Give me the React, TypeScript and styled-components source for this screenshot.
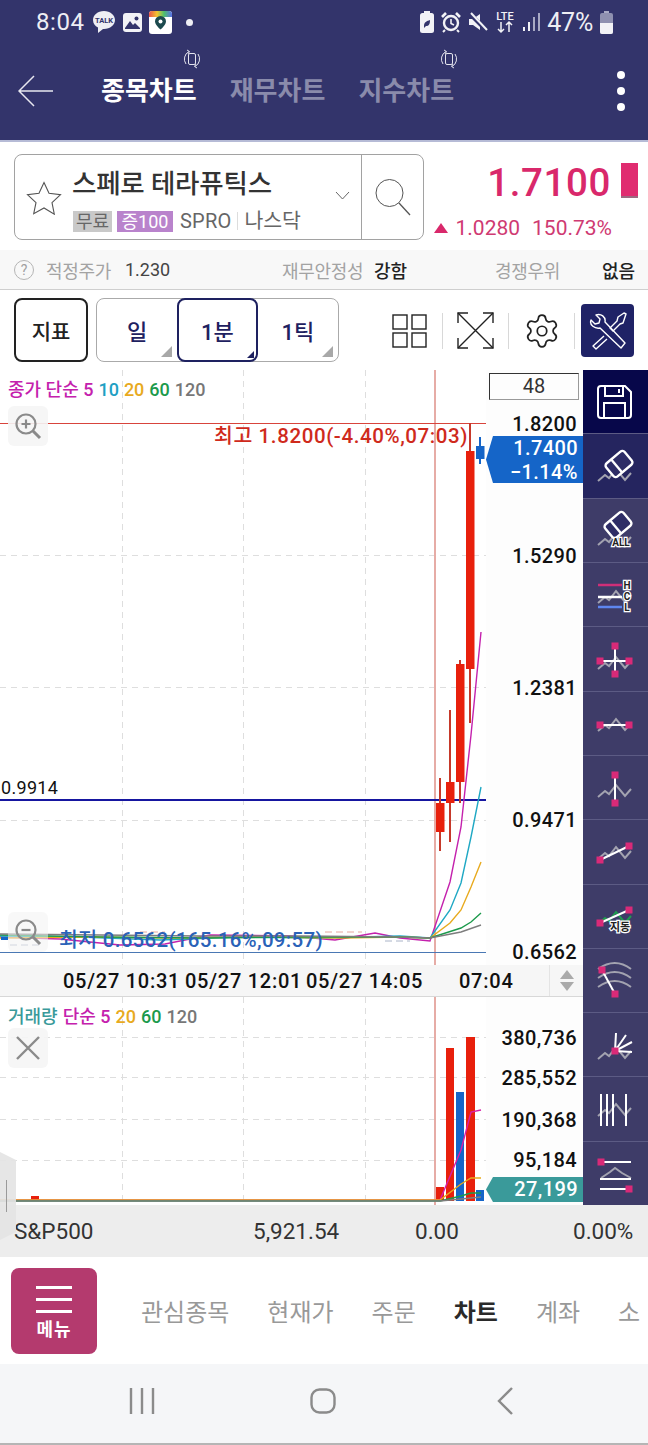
import React from "react";
import styled, { createGlobalStyle } from "styled-components";
import { Settings } from "lucide-react";

const FONT = `Roboto, "Noto Sans CJK KR", "Noto Sans", sans-serif`;
const PINK = "#d9286b";

const GlobalStyle = createGlobalStyle`
  html, body {
    margin: 0;
    padding: 0;
    background: #fff;
    overflow: hidden;
  }
  * { box-sizing: border-box; }
`;

const Page = styled.div`
  width: 648px;
  height: 1445px;
  display: flex;
  flex-direction: column;
  position: relative;
  overflow: hidden;
  font-family: ${FONT};
  color: #222;
`;

/* header */
const Header = styled.header`
  height: 140px;
  background: #33346b;
  display: flex;
  flex-direction: column;
`;

const StatusBar = styled.div`
  height: 44px;
  display: flex;
  align-items: center;
  padding: 0 35px 0 36px;
  color: #eeeef4;
`;

const Clock = styled.span`
  width: 56px;
  font-size: 24px;
  letter-spacing: 0.6px;
`;

const StatusGroup = styled.div<{ $gap: number; $right?: boolean }>`
  display: flex;
  align-items: center;
  gap: ${(p) => p.$gap}px;
  margin-left: ${(p) => (p.$right ? "auto" : "0")};
`;

const BatteryText = styled.span`
  font-size: 25px;
  letter-spacing: -0.2px;
`;

const TabRow = styled.div`
  flex: 1;
  display: flex;
  align-items: center;
  padding: 0 0 2px 18px;
`;

const TabList = styled.div`
  display: flex;
  gap: 33px;
  margin-left: 48px;
`;

const Tab = styled.div<{ $active?: boolean }>`
  position: relative;
  font-size: 26px;
  line-height: 32px;
  font-weight: 700;
  color: ${(p) => (p.$active ? "#fff" : "#8a8bab")};
`;

const RotateBadge = styled.span`
  position: absolute;
  right: -4px;
  top: -26px;
  line-height: 0;
`;

const MoreDots = styled.div`
  margin-left: auto;
  margin-right: 23px;
  display: flex;
  flex-direction: column;
  gap: 8px;
  > i {
    display: block;
    width: 8px;
    height: 8px;
    border-radius: 50%;
    background: #fff;
  }
`;

/* stock section */
const StockSection = styled.section`
  height: 110px;
  border-top: 2px solid #b6bbd6;
  display: flex;
  padding: 12px 0 0 14px;
`;

const StockBox = styled.div`
  width: 410px;
  height: 86px;
  border: 1px solid #a2a2a2;
  border-radius: 8px;
  display: flex;
`;

const StarCell = styled.div`
  width: 57px;
  display: flex;
  align-items: center;
  justify-content: center;
  padding-top: 2px;
`;

const StockMain = styled.div`
  flex: 1;
  position: relative;
  display: flex;
  flex-direction: column;
  padding-top: 12px;
`;

const StockName = styled.div`
  font-size: 26.5px;
  line-height: 34px;
  font-weight: 500;
  color: #333;
  letter-spacing: -0.2px;
`;

const TagRow = styled.div`
  display: flex;
  align-items: center;
  margin-top: 8px;
  font-size: 19px;
  color: #666;
`;

const Tag = styled.span<{ $bg: string; $fg: string; $w: number }>`
  width: ${(p) => p.$w}px;
  height: 21px;
  line-height: 21px;
  text-align: center;
  font-size: 18px;
  background: ${(p) => p.$bg};
  color: ${(p) => p.$fg};
  margin: 0 4px 0 1px;
`;

const TagCode = styled.span`
  margin-left: 3px;
  font-size: 20px;
  letter-spacing: 0.2px;
`;

const TagMarket = styled.span`
  margin-left: 6px;
  padding-left: 6px;
  font-size: 20.5px;
  border-left: 1px solid #ddd;
  line-height: 18px;
`;

const Chevron = styled.span`
  position: absolute;
  right: 11px;
  top: 36px;
  line-height: 0;
`;

const SearchCell = styled.div`
  width: 62px;
  border-left: 1px solid #a2a2a2;
  display: flex;
  align-items: center;
  justify-content: center;
`;

const PriceCol = styled.div`
  flex: 1;
  display: flex;
  flex-direction: column;
  align-items: flex-end;
  padding-right: 10px;
`;

const PriceRow = styled.div`
  display: flex;
  align-items: center;
  gap: 10px;
  height: 44px;
  margin-top: 6px;
`;

const Price = styled.span`
  font-size: 38.5px;
  font-weight: 500;
  color: ${PINK};
  letter-spacing: 0.6px;
`;

const PriceBar = styled.i`
  display: block;
  width: 17px;
  height: 35px;
  margin-top: -3px;
  background: #e02c70;
  border-bottom: 2px solid #9b6a80;
`;

const ChangeRow = styled.div`
  display: flex;
  align-items: center;
  margin: 12px 26px 0 0;
  font-size: 21px;
  color: #cf3a72;
`;

const UpMark = styled.i`
  width: 0;
  height: 0;
  border-left: 7px solid transparent;
  border-right: 7px solid transparent;
  border-bottom: 10px solid ${PINK};
  margin-right: 8px;
`;

const ChangePct = styled.span`
  margin-left: 12px;
`;

/* info strip */
const InfoRow = styled.div`
  height: 40px;
  background: #f8f8f8;
  border-bottom: 1px solid #cfcfcf;
  display: flex;
  align-items: center;
  padding-left: 14px;
  font-size: 18px;
`;

const Help = styled.span`
  width: 20px;
  height: 20px;
  border-radius: 50%;
  border: 1px solid #b5b5b5;
  color: #a0a0a0;
  font-size: 14px;
  line-height: 18px;
  text-align: center;
`;

const InfoLabel = styled.span<{ $w: number; $ml: number }>`
  width: ${(p) => p.$w}px;
  margin-left: ${(p) => p.$ml}px;
  color: #a3a3a3;
  white-space: nowrap;
  letter-spacing: -0.3px;
`;

const InfoValue = styled.span<{ $ml: number; $w: number; $strong?: boolean }>`
  width: ${(p) => p.$w}px;
  margin-left: ${(p) => p.$ml}px;
  color: ${(p) => (p.$strong ? "#222" : "#444")};
  font-weight: ${(p) => (p.$strong ? 500 : 400)};
  white-space: nowrap;
`;

/* toolbar */
const Toolbar = styled.div`
  height: 80px;
  display: flex;
  align-items: flex-start;
  padding: 8px 14px 0;
`;

const IndicatorBtn = styled.div`
  width: 74px;
  height: 64px;
  border: 2px solid #222;
  border-radius: 8px;
  display: flex;
  align-items: center;
  justify-content: center;
  font-size: 21px;
  font-weight: 500;
  color: #222;
`;

const PeriodGroup = styled.div`
  margin-left: 8px;
  width: 243px;
  height: 64px;
  border: 1px solid #aaa;
  border-radius: 8px;
  display: flex;
`;

const PeriodBtn = styled.div<{ $active?: boolean }>`
  position: relative;
  flex: 1;
  margin: -1px 0;
  border: ${(p) => (p.$active ? "2px solid #1e2160" : "2px solid transparent")};
  border-radius: 8px;
  display: flex;
  align-items: center;
  justify-content: center;
  font-size: 22px;
  font-weight: 500;
  color: #1e2160;
  &::after {
    content: "";
    position: absolute;
    right: ${(p) => (p.$active ? 2 : 3)}px;
    bottom: ${(p) => (p.$active ? 2 : 3)}px;
    border-style: solid;
    border-width: 0 0 ${(p) => (p.$active ? 7 : 11)}px ${(p) => (p.$active ? 7 : 11)}px;
    border-color: transparent transparent ${(p) => (p.$active ? "#1e2160" : "#a8a8a8")} transparent;
  }
`;

const ToolIcons = styled.div`
  margin-left: auto;
  display: flex;
  align-items: center;
  height: 53px;
  margin-top: 6px;
`;

const ToolSlot = styled.div<{ $w: number }>`
  width: ${(p) => p.$w}px;
  height: 100%;
  display: flex;
  align-items: center;
  justify-content: center;
`;

const ToolSep = styled.i`
  width: 1px;
  height: 36px;
  background: #d8d8d8;
`;

const ToolsBtn = styled.div`
  margin-left: 6px;
  width: 53px;
  height: 53px;
  background: #1f2266;
  border-radius: 4px;
  display: flex;
  align-items: center;
  justify-content: center;
`;

/* chart area */
const ChartArea = styled.div`
  height: 835px;
  display: grid;
  grid-template-columns: 583px 65px;
  grid-template-rows: 835px;
`;

const ChartCol = styled.div`
  display: flex;
  flex-direction: column;
`;

const Pane = styled.div<{ $h: number }>`
  position: relative;
  height: ${(p) => p.$h}px;
  background: linear-gradient(to right, #fff 486px, #fdfdfd 486px);
  > svg {
    display: block;
  }
`;

const Legend = styled.div`
  position: absolute;
  left: 8px;
  top: 9px;
  font-size: 18px;
  line-height: 22px;
  font-weight: 500;
  white-space: nowrap;
`;

const LegendPart = styled.span<{ $color: string }>`
  color: ${(p) => p.$color};
  margin-right: 5px;
`;

const PaneBtn = styled.div<{ $top: number; $faded?: boolean }>`
  position: absolute;
  left: 8px;
  top: ${(p) => p.$top}px;
  width: 40px;
  height: 40px;
  border-radius: 6px;
  background: ${(p) => (p.$faded ? "rgba(243,243,243,0.55)" : "rgba(245,245,245,0.9)")};
  display: flex;
  align-items: center;
  justify-content: center;
`;

const AxisLabel = styled.span<{ $top: number }>`
  position: absolute;
  right: 6px;
  top: ${(p) => p.$top}px;
  transform: translateY(-50%);
  font-size: 20px;
  font-weight: 500;
  line-height: 24px;
  letter-spacing: 0.4px;
  color: #111;
`;

const RefLabel = styled.span`
  position: absolute;
  left: 1px;
  top: 407px;
  font-size: 18px;
  line-height: 22px;
  color: #111;
  letter-spacing: 0.3px;
`;

const NoteLabel = styled.span<{ $top: number; $left: number; $color: string; $ls: number }>`
  position: absolute;
  left: ${(p) => p.$left}px;
  top: ${(p) => p.$top}px;
  font-size: 20.5px;
  line-height: 24px;
  font-weight: 500;
  color: ${(p) => p.$color};
  white-space: nowrap;
  letter-spacing: ${(p) => p.$ls}px;
`;

const CountBox = styled.div`
  position: absolute;
  left: 489px;
  top: 3px;
  width: 90px;
  height: 27px;
  border: 1px solid #333;
  border-right: 1px solid #999;
  border-bottom: 1px solid #999;
  text-align: center;
  font-size: 20px;
  line-height: 25px;
  color: #333;
`;

const PriceTag = styled.div<{ $bg: string; $top: number; $h: number }>`
  position: absolute;
  left: 486px;
  top: ${(p) => p.$top}px;
  width: 97px;
  height: ${(p) => p.$h}px;
  background: ${(p) => p.$bg};
  clip-path: polygon(0 50%, 7px 0, 100% 0, 100% 100%, 7px 100%);
  color: #fff;
  font-size: 20px;
  font-weight: 500;
  line-height: 24px;
  letter-spacing: 0.4px;
  text-align: right;
  padding-right: 5px;
`;

const TimeAxis = styled.div`
  height: 32px;
  background: #f6f6f6;
  border-bottom: 1px solid #d8d8d8;
  display: flex;
  align-items: center;
  padding-left: 63px;
  font-size: 20px;
  font-weight: 500;
  color: #111;
  letter-spacing: 0.75px;
`;

const TimeTick = styled.span<{ $w: number }>`
  width: ${(p) => p.$w}px;
  white-space: nowrap;
`;

const ScrollArrows = styled.div`
  margin-left: auto;
  width: 34px;
  height: 100%;
  border-left: 1px solid #e4e4e4;
  display: flex;
  flex-direction: column;
  align-items: center;
  justify-content: center;
  gap: 3px;
  &::before,
  &::after {
    content: "";
    border-left: 7px solid transparent;
    border-right: 7px solid transparent;
  }
  &::before {
    border-bottom: 9px solid #aaa;
  }
  &::after {
    border-top: 9px solid #aaa;
  }
`;

const Rail = styled.nav`
  display: flex;
  flex-direction: column;
  background: #3e3c68;
`;

const RailCell = styled.div<{ $bg?: string }>`
  flex: 1;
  min-height: 0;
  background: ${(p) => p.$bg || "transparent"};
  border-bottom: 1px solid #5c5b84;
  line-height: 0;
  &:last-child {
    border-bottom: 0;
  }
`;

const SideHandle = styled.div`
  position: absolute;
  left: 0;
  top: 1152px;
  width: 16px;
  height: 88px;
  background: rgba(228, 228, 228, 0.92);
  clip-path: polygon(0 0, 100% 8px, 100% 80px, 0 100%);
  &::after {
    content: "";
    position: absolute;
    left: 6px;
    top: 28px;
    width: 1px;
    height: 32px;
    background: #9a9a9a;
  }
`;

/* bottom */
const IndexRow = styled.div`
  height: 52px;
  background: #ededed;
  display: flex;
  align-items: center;
  padding-left: 14px;
  font-size: 22.5px;
  color: #333;
`;

const IndexCell = styled.span<{ $w: number }>`
  width: ${(p) => p.$w}px;
  white-space: nowrap;
`;

const BottomNav = styled.div`
  height: 107px;
  background: #fff;
  display: flex;
  align-items: center;
  padding-left: 11px;
`;

const MenuBtn = styled.div`
  width: 86px;
  height: 86px;
  background: #b43a6e;
  border-radius: 8px;
  display: flex;
  flex-direction: column;
  align-items: center;
  padding-top: 18px;
  color: #fff;
  > i {
    display: block;
    width: 36px;
    height: 3px;
    background: #fff;
    margin-bottom: 9px;
  }
`;

const MenuText = styled.span`
  font-size: 18px;
  font-weight: 700;
  line-height: 18px;
  margin-top: -1px;
  letter-spacing: 1px;
`;

const NavItems = styled.div`
  display: flex;
  margin-left: 44px;
  gap: 38px;
  white-space: nowrap;
`;

const NavItem = styled.span<{ $active?: boolean }>`
  font-size: 24px;
  color: ${(p) => (p.$active ? "#2a2a2a" : "#999")};
  font-weight: ${(p) => (p.$active ? 700 : 400)};
`;

const SystemNav = styled.div`
  height: 81px;
  background: #f5f6f8;
  border-bottom: 2px solid #b5b5b5;
  display: flex;
  align-items: center;
  padding: 0 0 5px 129px;
`;

const SysIcon = styled.svg<{ $ml: number }>`
  margin-left: ${(p) => p.$ml}px;
`;

/* chart drawings */
const GRID_X = [122.5, 243.5, 365.5];

const candles = [
  { x: 436, top: 803, bottom: 832, hi: 778, lo: 851, up: true },
  { x: 446, top: 782, bottom: 803, hi: 710, lo: 842, up: true },
  { x: 456, top: 664, bottom: 782, hi: 660, lo: 803, up: true },
  { x: 466, top: 451, bottom: 669, hi: 423, lo: 723, up: true },
  { x: 476, top: 446, bottom: 459, hi: 437, lo: 464, up: false },
];

const maLines = [
  { color: "#c421ad", pts: "0,937 60,939 120,945 165,944 210,935 290,936 335,940 375,933 400,938 430,941 450,882 461,827 471,735 481,632" },
  { color: "#1fa8c4", pts: "0,936 80,937 160,940 240,937 320,938 400,936 430,938 450,910 461,883 471,837 481,787" },
  { color: "#e8aa1e", pts: "0,938 90,937 170,938 250,937 340,938 400,937 430,938 450,923 461,910 471,887 481,862" },
  { color: "#1c9a4c", pts: "0,935 100,937 200,938 300,937 400,937 430,938 461,928 471,922 481,913" },
  { color: "#7d7d7d", pts: "0,934 100,935 200,936 300,936 400,937 430,938 461,932 481,925" },
];

const volBars = [
  { x: 31, top: 1196, w: 8, color: "#e8200c" },
  { x: 436, top: 1187, w: 8, color: "#e8200c" },
  { x: 446, top: 1048, w: 8, color: "#e8200c" },
  { x: 456, top: 1092, w: 8, color: "#1565c8" },
  { x: 466, top: 1037, w: 9, color: "#e8200c" },
  { x: 476, top: 1190, w: 8, color: "#1565c8" },
];

const volLines = [
  { color: "#d81fa8", pts: "0,1200 432,1200 440,1200 461,1150 471,1112 481,1110" },
  { color: "#e8aa1e", pts: "0,1200 440,1200 461,1184 471,1178 481,1178" },
  { color: "#1c9a4c", pts: "0,1201 440,1201 461,1196 471,1193 481,1193" },
  { color: "#7d7d7d", pts: "0,1201 440,1201 461,1199 481,1197" },
];

const Gridlines = ({ y0, y1, rows }: { y0: number; y1: number; rows: number[] }) => (
  <g stroke="#dedede" strokeDasharray="6 5" strokeWidth="1">
    {GRID_X.map((x) => (
      <line key={x} x1={x} x2={x} y1={y0} y2={y1} />
    ))}
    {rows.map((y) => (
      <line key={y} x1={0} x2={486} y1={y + 0.5} y2={y + 0.5} />
    ))}
  </g>
);

const PriceChart = () => (
  <svg width="583" height="595" viewBox="0 370 583 595">
    <Gridlines y0={370} y1={965} rows={[555, 687, 820]} />
    <line x1="435" x2="435" y1="370" y2="965" stroke="#e6aca6" strokeWidth="2" />
    <line x1="0" x2="486" y1="423.5" y2="423.5" stroke="#d8443c" />
    <line x1="0" x2="486" y1="800" y2="800" stroke="#1616a0" strokeWidth="2" />
    <line x1="0" x2="486" y1="952.5" y2="952.5" stroke="#4a78b4" />
    {candles.map((c) => (
      <g key={c.x}>
        <line x1={c.x + 4} x2={c.x + 4} y1={c.hi} y2={c.lo} stroke={c.up ? "#c6392a" : "#1565c8"} strokeWidth="2" />
        <rect x={c.x} y={c.top} width="8.5" height={c.bottom - c.top} fill={c.up ? "#e8200c" : "#1565c8"} />
      </g>
    ))}
    <g stroke="#aab4c8" strokeDasharray="7 4" fill="none">
      <line x1="10" x2="40" y1="945" y2="945" />
      <line x1="325" x2="362" y1="932" y2="932" stroke="#e8a8a0" />
      <line x1="385" x2="410" y1="941" y2="941" />
      <line x1="140" x2="165" y1="932" y2="932" stroke="#e8a8a0" />
    </g>
    {maLines.map((l) => (
      <polyline key={l.color} points={l.pts} fill="none" stroke={l.color} strokeWidth="1.4" />
    ))}
    <rect x="1" y="937" width="7" height="3" fill="#1565c8" />
  </svg>
);

const VolumeChart = () => (
  <svg width="583" height="208" viewBox="0 997 583 208">
    <Gridlines y0={997} y1={1205} rows={[1037, 1077, 1119, 1160]} />
    <line x1="435" x2="435" y1="997" y2="1205" stroke="#e6aca6" strokeWidth="2" />
    {volBars.map((b) => (
      <rect key={b.x} x={b.x} y={b.top} width={b.w} height={1201 - b.top} fill={b.color} />
    ))}
    {volLines.map((l) => (
      <polyline key={l.color} points={l.pts} fill="none" stroke={l.color} strokeWidth="1.4" />
    ))}
  </svg>
);

/* rail icons, all drawn on the 65x64 cell */
const Zig = ({ y, color = "#a3a3b0" }: { y: number; color?: string }) => (
  <polyline
    points={`15,${y + 6} 22,${y} 26,${y + 3} 33,${y - 6} 42,${y + 5} 48,${y - 2}`}
    fill="none"
    stroke={color}
    strokeWidth="2"
  />
);

const Sq = ({ x, y }: { x: number; y: number }) => (
  <rect x={x - 3.5} y={y - 3.5} width="7" height="7" fill="#d92a78" />
);

const Eraser = ({ x, y }: { x: number; y: number }) => (
  <g transform={`translate(${x} ${y}) rotate(-40)`} stroke="#fff" strokeWidth="2.4" fill="#2e2d66">
    <rect x="-12" y="-8.5" width="24" height="17" rx="3" />
    <line x1="-3" x2="-3" y1="-8.5" y2="8.5" />
  </g>
);

const Badge = ({ x, y, children, size = 10 }: { x: number; y: number; children: React.ReactNode; size?: number }) => (
  <text
    x={x}
    y={y}
    textAnchor="middle"
    fontSize={size}
    fontWeight="700"
    fill="#222"
    stroke="#fff"
    strokeWidth="2.5"
    paintOrder="stroke"
    fontFamily={FONT}
  >
    {children}
  </text>
);

const W = { stroke: "#fff", strokeWidth: 2, fill: "none" };

const railIcons: React.ReactNode[] = [
  <>
    <path d="M18 16h24l6 6v23a3 3 0 0 1-3 3H18a3 3 0 0 1-3-3V19a3 3 0 0 1 3-3z" {...W} />
    <path d="M22 16v10h18V16" {...W} />
    <path d="M21 48V33h21v15" {...W} />
    <line x1="36" x2="36" y1="19" y2="23" {...W} />
  </>,
  <>
    <Zig y={41} />
    <Eraser x={36} y={30} />
  </>,
  <>
    <Zig y={40} />
    <Eraser x={35} y={26} />
    <Badge x={38} y={47}>ALL</Badge>
  </>,
  <>
    <Zig y={34} />
    <line x1="15" x2="39" y1="22" y2="22" stroke="#cf2f78" strokeWidth="2.5" />
    <line x1="15" x2="39" y1="34" y2="34" stroke="#fff" strokeWidth="2.5" />
    <line x1="15" x2="39" y1="44" y2="44" stroke="#5e86f0" strokeWidth="2.5" />
    <Badge x={44} y={26}>H</Badge>
    <Badge x={44} y={37}>C</Badge>
    <Badge x={44} y={48}>L</Badge>
  </>,
  <>
    <Zig y={36} />
    <line x1="32" x2="32" y1="19" y2="47" {...W} />
    <line x1="17" x2="46" y1="34" y2="34" {...W} />
    <Sq x={32} y={19} />
    <Sq x={32} y={47} />
    <Sq x={17} y={34} />
    <Sq x={46} y={34} />
  </>,
  <>
    <Zig y={33} />
    <line x1="17" x2="46" y1="33" y2="33" {...W} />
    <Sq x={17} y={33} />
    <Sq x={46} y={33} />
  </>,
  <>
    <Zig y={35} />
    <line x1="32" x2="32" y1="19" y2="47" {...W} />
    <Sq x={32} y={19} />
    <Sq x={32} y={47} />
  </>,
  <>
    <Zig y={33} />
    <line x1="17" x2="46" y1="40" y2="26" {...W} />
    <Sq x={17} y={40} />
    <Sq x={46} y={26} />
  </>,
  <>
    <Zig y={33} color="#1f9c4e" />
    <line x1="17" x2="46" y1="38" y2="25" {...W} />
    <Sq x={17} y={38} />
    <Sq x={46} y={25} />
    <Badge x={37} y={46} size={11}>지동</Badge>
  </>,
  <>
    <path d="M15 20q17-12 33 0M15 29q17-12 33 0M15 38q17-12 33 0" fill="none" stroke="#a3a3b0" strokeWidth="2" />
    <line x1="19" x2="32" y1="21" y2="45" {...W} />
    <Sq x={19} y={21} />
    <Sq x={32} y={45} />
  </>,
  <>
    <Zig y={40} />
    <path d="M32 38L33 20M32 38L43 22M32 38L49 29M32 38L49 39" {...W} />
    <Sq x={32} y={38} />
  </>,
  <>
    <Zig y={33} />
    <path d="M18 17v32M24 17v32M30 17v32M43 17v32" {...W} />
  </>,
  <>
    <polyline points="18,36 27,30 32,26 39,31 48,36" fill="none" stroke="#a3a3b0" strokeWidth="2" />
    <line x1="17" x2="48" y1="20" y2="20" {...W} />
    <line x1="17" x2="48" y1="37" y2="37" {...W} />
    <line x1="17" x2="48" y1="47" y2="47" {...W} />
    <Sq x={18} y={20} />
    <Sq x={46} y={47} />
  </>,
];

/* status bar icons */
const KakaoIcon = () => (
  <svg width="24" height="24" viewBox="0 0 24 24">
    <path d="M12 1C5.6 1 1 5 1 10c0 3.400 2.100 6 5 7.500L6 23l5-4.100h1c6.100 0 11-3.900 11-8.900S18.100 1 12 1z" fill="#eeeef4" />
    <text x="12" y="13" textAnchor="middle" fontSize="7.500" fontWeight="700" fill="#33346b" fontFamily={FONT}>TALK</text>
  </svg>
);

const GalleryIcon = () => (
  <svg width="19" height="19" viewBox="0 0 19 19">
    <rect width="19" height="19" rx="3" fill="#f2f2f6" />
    <circle cx="13.500" cy="5.500" r="2" fill="#33346b" />
    <path d="M2 15l5-7 3 4 2-2 5 5v1H2z" fill="#33346b" />
  </svg>
);

const MapIcon = () => (
  <svg width="23" height="23" viewBox="0 0 23 23">
    <defs>
      <linearGradient id="mapBow" x1="0" x2="1" y1="0" y2="0">
        <stop offset="0" stopColor="#e8524a" />
        <stop offset="0.35" stopColor="#f4c430" />
        <stop offset="0.65" stopColor="#4cc06a" />
        <stop offset="1" stopColor="#5a6ee8" />
      </linearGradient>
    </defs>
    <rect width="23" height="23" rx="3" fill="#fff" />
    <path d="M0 6V3a3 3 0 0 1 3-3h17a3 3 0 0 1 3 3v3z" fill="url(#mapBow)" />
    <path d="M11.500 5a5.500 5.500 0 0 0-5.500 5.500c0 3.500 5.500 8 5.500 8s5.500-4.500 5.500-8A5.500 5.500 0 0 0 11.500 5z" fill="#1c4a4e" />
    <circle cx="11.500" cy="10.500" r="2" fill="#fff" />
  </svg>
);

const Dot = styled.i`
  width: 7px;
  height: 7px;
  border-radius: 50%;
  background: #eeeef4;
  margin-left: 14px;
`;

const BatteryLeaf = () => (
  <svg width="14" height="22" viewBox="0 0 14 22">
    <rect x="4" y="0" width="6" height="3" fill="#f2f2f6" />
    <rect x="0" y="2" width="14" height="20" rx="2.500" fill="#f2f2f6" />
    <path d="M4 15c0-4 3-5 6-6 0 4-1 6-4 6l-2 2z" fill="#33346b" />
  </svg>
);

const AlarmIcon = () => (
  <svg width="20" height="22" viewBox="0 0 20 22" fill="none" stroke="#f2f2f6">
    <circle cx="10" cy="12" r="7" strokeWidth="2.400" />
    <path d="M10 8v4.500l3 1.500" strokeWidth="1.600" />
    <path d="M1 6l4-4M19 6l-4-4" strokeWidth="2.600" />
    <path d="M4 19l-2 2M16 19l2 2" strokeWidth="2" />
  </svg>
);

const MuteIcon = () => (
  <svg width="20" height="20" viewBox="0 0 20 20">
    <path d="M1 7h4l7-5v16l-7-5H1z" fill="#f2f2f6" />
    <path d="M2 2l16 16" stroke="#33346b" strokeWidth="4" />
    <path d="M3 1l16 17" stroke="#f2f2f6" strokeWidth="2" />
  </svg>
);

const LteIcon = () => (
  <svg width="20" height="24" viewBox="0 0 20 24" fill="none" stroke="#f2f2f6" strokeWidth="1.500">
    <text x="10" y="10" textAnchor="middle" fontSize="11" fontWeight="500" fill="#f2f2f6" stroke="none" fontFamily={FONT}>LTE</text>
    <path d="M6 12v10M3 19l3 3 3-3M14 22V12M11 15l3-3 3 3" />
  </svg>
);

const SignalIcon = () => (
  <svg width="18" height="20" viewBox="0 0 18 20" stroke="#f2f2f6" strokeWidth="2">
    <line x1="2" x2="2" y1="15" y2="19" />
    <line x1="7" x2="7" y1="10" y2="19" />
    <line x1="12" x2="12" y1="5" y2="19" stroke="#a8a9c4" />
    <line x1="17" x2="17" y1="1" y2="19" stroke="#a8a9c4" />
  </svg>
);

const BatteryIcon = () => (
  <svg width="13" height="23" viewBox="0 0 13 23">
    <rect x="4" y="0" width="5" height="2" fill="#a8a9c4" />
    <rect x="0" y="2" width="13" height="21" rx="2" fill="#8f90b0" />
    <path d="M0 12h13v9a2 2 0 0 1-2 2H2a2 2 0 0 1-2-2z" fill="#f2f2f6" />
  </svg>
);

const RotateIcon = () => (
  <svg width="18" height="20" viewBox="0 0 18 20" fill="none" stroke="#e4e4ee" strokeWidth="1">
    <rect x="5.500" y="4.500" width="7" height="11" rx="1.500" />
    <path d="M3 15A8.500 8.500 0 0 1 6 2.500M15 5a8.500 8.500 0 0 1-3 12.500" />
    <path d="M4 1l2.500 1.500L5 5M14 19l-2.500-1.500L13 15" />
  </svg>
);

export default function App() {
  return (
    <Page>
      <GlobalStyle />
      <Header>
        <StatusBar>
          <Clock>8:04</Clock>
          <StatusGroup $gap={7}>
            <KakaoIcon />
            <GalleryIcon />
            <MapIcon />
          </StatusGroup>
          <Dot />
          <StatusGroup $gap={7} $right>
            <BatteryLeaf />
            <AlarmIcon />
            <MuteIcon />
            <LteIcon />
            <SignalIcon />
            <BatteryText>47%</BatteryText>
            <BatteryIcon />
          </StatusGroup>
        </StatusBar>
        <TabRow>
          <svg width="35" height="32" viewBox="0 0 35 32" fill="none" stroke="#e8e8f0" strokeWidth="1.500">
            <path d="M16 1L1 16l15 15M1 16h34" />
          </svg>
          <TabList>
            <Tab $active>
              종목차트
              <RotateBadge><RotateIcon /></RotateBadge>
            </Tab>
            <Tab>재무차트</Tab>
            <Tab>
              지수차트
              <RotateBadge><RotateIcon /></RotateBadge>
            </Tab>
          </TabList>
          <MoreDots>
            <i />
            <i />
            <i />
          </MoreDots>
        </TabRow>
      </Header>

      <StockSection>
        <StockBox>
          <StarCell>
            <svg width="36" height="34" viewBox="0 0 36 34" fill="none" stroke="#555" strokeWidth="1.100">
              <path d="M18 1.500l5 10.800 11.500 1.400-8.500 8 2.300 11.500L18 27l-10.300 5.700L10 21.700l-8.500-8L13 12.300z" />
            </svg>
          </StarCell>
          <StockMain>
            <StockName>스페로 테라퓨틱스</StockName>
            <TagRow>
              <Tag $bg="#c9c9c9" $fg="#666" $w={39}>무료</Tag>
              <Tag $bg="#b983cc" $fg="#fff" $w={56}>증100</Tag>
              <TagCode>SPRO</TagCode>
              <TagMarket>나스닥</TagMarket>
            </TagRow>
            <Chevron>
              <svg width="15" height="9" viewBox="0 0 15 9" fill="none" stroke="#666" strokeWidth="1">
                <path d="M1 1l6.500 7L14 1" />
              </svg>
            </Chevron>
          </StockMain>
          <SearchCell>
            <svg width="36" height="38" viewBox="0 0 36 38" fill="none" stroke="#555" strokeWidth="1">
              <circle cx="14.500" cy="15" r="13.500" />
              <path d="M24 25l11 12" strokeWidth="1.300" />
            </svg>
          </SearchCell>
        </StockBox>
        <PriceCol>
          <PriceRow>
            <Price>1.7100</Price>
            <PriceBar />
          </PriceRow>
          <ChangeRow>
            <UpMark />
            1.0280
            <ChangePct>150.73%</ChangePct>
          </ChangeRow>
        </PriceCol>
      </StockSection>

      <InfoRow>
        <Help>?</Help>
        <InfoLabel $ml={12} $w={65}>적정주가</InfoLabel>
        <InfoValue $ml={14} $w={157}>1.230</InfoValue>
        <InfoLabel $ml={0} $w={81}>재무안정성</InfoLabel>
        <InfoValue $ml={11} $w={89} $strong>강함</InfoValue>
        <InfoLabel $ml={32} $w={65}>경쟁우위</InfoLabel>
        <InfoValue $ml={42} $w={34} $strong>없음</InfoValue>
      </InfoRow>

      <Toolbar>
        <IndicatorBtn>지표</IndicatorBtn>
        <PeriodGroup>
          <PeriodBtn>일</PeriodBtn>
          <PeriodBtn $active>1분</PeriodBtn>
          <PeriodBtn>1틱</PeriodBtn>
        </PeriodGroup>
        <ToolIcons>
          <ToolSlot $w={66}>
            <svg width="35" height="34" viewBox="0 0 35 34" fill="none" stroke="#222" strokeWidth="1.400">
              <rect x="1" y="1" width="14" height="14" />
              <rect x="20" y="1" width="14" height="14" />
              <rect x="1" y="19" width="14" height="14" />
              <rect x="20" y="19" width="14" height="14" />
            </svg>
          </ToolSlot>
          <ToolSep />
          <ToolSlot $w={65}>
            <svg width="37" height="37" viewBox="0 0 37 37" fill="none" stroke="#222" strokeWidth="1.400">
              <path d="M1 1l35 35M36 1L1 36" />
              <path d="M1 11V1h10M26 1h10v10M36 26v10H26M11 36H1V26" />
            </svg>
          </ToolSlot>
          <ToolSep />
          <ToolSlot $w={65}>
            <Settings size={38} strokeWidth={1.100} color="#222" />
          </ToolSlot>
          <ToolSep />
          <ToolsBtn>
            <svg width="38" height="38" viewBox="0 0 38 38" fill="none" stroke="#fff" strokeWidth="1.400" strokeLinejoin="round">
              <path d="M2 8l4 4 4-1 1-4-4-4c5-2 10 2 9 7l20 21-4 5L11 16C6 17 0 13 2 8z" />
              <path d="M37 2l-2-1-6 4-1 4-7 7 3 3 7-7 3-1z" />
              <path d="M15 24L4 34l3 3 11-10" />
            </svg>
          </ToolsBtn>
        </ToolIcons>
      </Toolbar>

      <ChartArea>
        <ChartCol>
          <Pane $h={595}>
            <PriceChart />
            <Legend>
              <LegendPart $color="#c421ad">종가 단순 5</LegendPart>
              <LegendPart $color="#1fa0c4">10</LegendPart>
              <LegendPart $color="#e8aa1e">20</LegendPart>
              <LegendPart $color="#1c9a4c">60</LegendPart>
              <LegendPart $color="#777">120</LegendPart>
            </Legend>
            <PaneBtn $top={36}>
              <svg width="28" height="28" viewBox="0 0 28 28" fill="none" stroke="#8a8a8a" strokeWidth="2.200">
                <circle cx="12" cy="12" r="9.500" />
                <path d="M7.500 12h9M12 7.500v9" />
                <path d="M19 19l7 7" strokeWidth="3" />
              </svg>
            </PaneBtn>
            <PaneBtn $top={542} $faded>
              <svg width="28" height="28" viewBox="0 0 28 28" fill="none" stroke="#8a8a8a" strokeWidth="2.200">
                <circle cx="12" cy="12" r="9.500" />
                <path d="M7.500 12h9" />
                <path d="M19 19l7 7" strokeWidth="3" />
              </svg>
            </PaneBtn>
            <CountBox>48</CountBox>
            <NoteLabel $left={214} $top={54} $color="#cf2a1c" $ls={0.6}>최고 1.8200(-4.40%,07:03)</NoteLabel>
            <NoteLabel $left={59} $top={558} $color="#2a62b8" $ls={0.3}>최저 0.6562(165.16%,09:57)</NoteLabel>
            <RefLabel>0.9914</RefLabel>
            <AxisLabel $top={54}>1.8200</AxisLabel>
            <AxisLabel $top={186}>1.5290</AxisLabel>
            <AxisLabel $top={318}>1.2381</AxisLabel>
            <AxisLabel $top={450}>0.9471</AxisLabel>
            <AxisLabel $top={582}>0.6562</AxisLabel>
            <PriceTag $bg="#1565c8" $top={66} $h={47}>
              1.7400
              <br />
              −1.14%
            </PriceTag>
          </Pane>
          <TimeAxis>
            <TimeTick $w={122}>05/27 10:31</TimeTick>
            <TimeTick $w={121}>05/27 12:01</TimeTick>
            <TimeTick $w={153}>05/27 14:05</TimeTick>
            <TimeTick $w={55}>07:04</TimeTick>
            <ScrollArrows />
          </TimeAxis>
          <Pane $h={208}>
            <VolumeChart />
            <Legend>
              <LegendPart $color="#3a9a9a">거래량</LegendPart>
              <LegendPart $color="#c421ad">단순 5</LegendPart>
              <LegendPart $color="#e8aa1e">20</LegendPart>
              <LegendPart $color="#1c9a4c">60</LegendPart>
              <LegendPart $color="#777">120</LegendPart>
            </Legend>
            <PaneBtn $top={31}>
              <svg width="24" height="24" viewBox="0 0 24 24" stroke="#8a8a8a" strokeWidth="2.400">
                <path d="M1 1l22 22M23 1L1 23" />
              </svg>
            </PaneBtn>
            <AxisLabel $top={41}>380,736</AxisLabel>
            <AxisLabel $top={81}>285,552</AxisLabel>
            <AxisLabel $top={123}>190,368</AxisLabel>
            <AxisLabel $top={163}>95,184</AxisLabel>
            <PriceTag $bg="#3a9a9a" $top={180} $h={25}>27,199</PriceTag>
          </Pane>
        </ChartCol>
        <Rail>
          {railIcons.map((icon, i) => (
            <RailCell key={i} $bg={i === 0 ? "#07074a" : i === 1 ? "#25255f" : undefined}>
              <svg width="65" height="64" viewBox="0 0 65 64">{icon}</svg>
            </RailCell>
          ))}
        </Rail>
      </ChartArea>

      <IndexRow>
        <IndexCell $w={239}>S&amp;P500</IndexCell>
        <IndexCell $w={162}>5,921.54</IndexCell>
        <IndexCell $w={158}>0.00</IndexCell>
        <IndexCell $w={60}>0.00%</IndexCell>
      </IndexRow>

      <BottomNav>
        <MenuBtn>
          <i />
          <i />
          <i />
          <MenuText>메뉴</MenuText>
        </MenuBtn>
        <NavItems>
          <NavItem>관심종목</NavItem>
          <NavItem>현재가</NavItem>
          <NavItem>주문</NavItem>
          <NavItem $active>차트</NavItem>
          <NavItem>계좌</NavItem>
          <NavItem>소</NavItem>
        </NavItems>
      </BottomNav>

      <SystemNav>
        <SysIcon $ml={0} width="26" height="28" viewBox="0 0 26 28" stroke="#8b8b8b" strokeWidth="2.400">
          <path d="M2 1v26M13 1v26M24 1v26" />
        </SysIcon>
        <SysIcon $ml={155} width="26" height="26" viewBox="0 0 26 26" fill="none" stroke="#8b8b8b" strokeWidth="2.400">
          <rect x="1.500" y="1.500" width="23" height="23" rx="8" />
        </SysIcon>
        <SysIcon $ml={161} width="17" height="30" viewBox="0 0 17 30" fill="none" stroke="#8b8b8b" strokeWidth="2.400">
          <path d="M15 2L2 15l13 13" />
        </SysIcon>
      </SystemNav>

      <SideHandle />
    </Page>
  );
}
